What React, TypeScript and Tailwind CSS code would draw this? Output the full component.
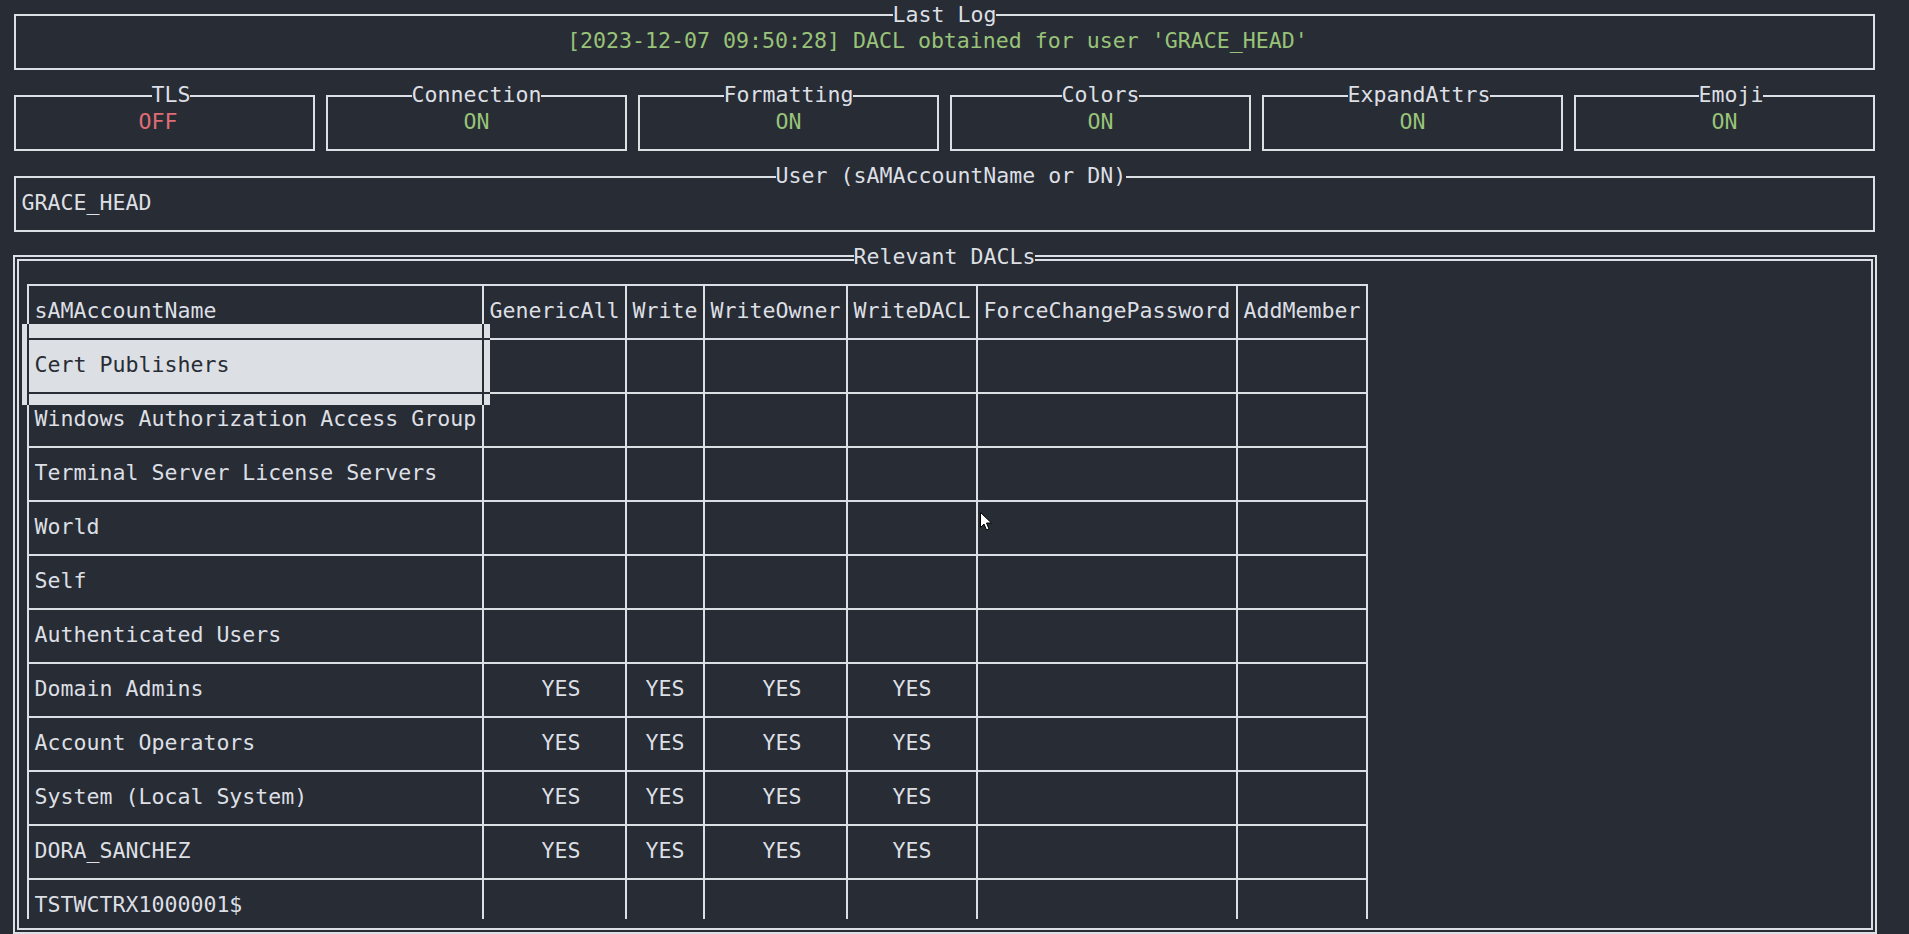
import React from 'react';

// terminal grid: 13px x 27px cells
const headers = [
  'sAMAccountName',
  'GenericAll',
  'Write',
  'WriteOwner',
  'WriteDACL',
  'ForceChangePassword',
  'AddMember',
];

// leading spaces that centre "YES" inside each column
const yesPad = ['', '    ', ' ', '    ', '   ', '', ''];

const rows = [
  { name: 'Cert Publishers', perms: [] as number[] },
  { name: 'Windows Authorization Access Group', perms: [] },
  { name: 'Terminal Server License Servers', perms: [] },
  { name: 'World', perms: [] },
  { name: 'Self', perms: [] },
  { name: 'Authenticated Users', perms: [] },
  { name: 'Domain Admins', perms: [1, 2, 3, 4] },
  { name: 'Account Operators', perms: [1, 2, 3, 4] },
  { name: 'System (Local System)', perms: [1, 2, 3, 4] },
  { name: 'DORA_SANCHEZ', perms: [1, 2, 3, 4] },
  { name: 'TSTWCTRX1000001$', perms: [] },
];

const toggles = [
  { title: 'TLS', value: '         OFF', color: 'text-[#e06c75]', pad: 'pl-[135.5px]' },
  { title: 'Connection', value: '          ON', color: 'text-[#98c379]', pad: 'pl-[83.5px]' },
  { title: 'Formatting', value: '          ON', color: 'text-[#98c379]', pad: 'pl-[83.5px]' },
  { title: 'Colors', value: '          ON', color: 'text-[#98c379]', pad: 'pl-[109.5px]' },
  { title: 'ExpandAttrs', value: '          ON', color: 'text-[#98c379]', pad: 'pl-[83.5px]' },
  { title: 'Emoji', value: '          ON', color: 'text-[#98c379]', pad: 'pl-[122.5px]' },
];

function Box({
  title,
  titlePad,
  className,
  double,
  children,
}: {
  title: string;
  titlePad: string;
  className: string;
  double?: boolean;
  children?: React.ReactNode;
}) {
  return (
    <div
      className={`flex flex-col border-[#dcdfe4] ${double ? 'border-[6px] border-double' : 'border-2'} ${className}`}
    >
      <div className={`flex h-0 items-center ${double ? '-mt-[4px] mb-[4px]' : '-mt-[2px] mb-[2px]'} ${titlePad}`}>
        <span className="bg-[#282c34] whitespace-pre leading-[27px]">{title}</span>
      </div>
      {children}
    </div>
  );
}

function Cursor() {
  return (
    <svg className="absolute left-[979px] top-[511px]" width="14" height="21" viewBox="0 0 14 21">
      <path
        d="M1.5 1.5 L1.5 16.5 L5 13 L7.5 19 L10 18 L7.5 12 L12.5 12 Z"
        fill="#ffffff"
        stroke="#000000"
        strokeWidth="1"
        strokeLinejoin="round"
      />
    </svg>
  );
}

export default function App() {
  return (
    <div className="relative flex h-screen w-full flex-col items-start overflow-hidden bg-[#282c34] pl-[14px] pt-[14px] font-['DejaVu_Sans_Mono',monospace] text-[21.59px] leading-[27px] text-[#dcdfe4]">
      {/* Last Log */}
      <Box title="Last Log" titlePad="pl-[876.5px]" className="h-[56px] w-[1861px]">
        <div className="flex flex-1 items-center whitespace-pre pb-[2px] pl-[5.5px] text-[#98c379]">
          {' '.repeat(42) + "[2023-12-07 09:50:28] DACL obtained for user 'GRACE_HEAD'"}
        </div>
      </Box>

      {/* Toggles */}
      <div className="mt-[25px] flex gap-[11px]">
        {toggles.map((t) => (
          <Box key={t.title} title={t.title} titlePad={t.pad} className="h-[56px] w-[301px]">
            <div className={`flex flex-1 items-center whitespace-pre pb-[2px] pl-[5.5px] ${t.color}`}>{t.value}</div>
          </Box>
        ))}
      </div>

      {/* User */}
      <Box title="User (sAMAccountName or DN)" titlePad="pl-[759.5px]" className="mt-[25px] h-[56px] w-[1861px]">
        <div className="flex flex-1 items-center whitespace-pre pb-[2px] pl-[5.5px]">GRACE_HEAD</div>
      </Box>

      {/* Relevant DACLs */}
      <Box
        title="Relevant DACLs"
        titlePad="pl-[834.5px]"
        double
        className="-ml-[1px] mt-[23px] h-[681px] w-[1864px]"
      >
        <div className="relative ml-[8px] mt-[23px] grid w-fit grid-cols-[455px_143px_78px_143px_130px_260px_130px] self-start border-l-2 border-t-2 border-[#dcdfe4]">
          {headers.map((h) => (
            <div
              key={h}
              className="flex h-[54px] items-center whitespace-pre border-b-2 border-r-2 border-[#dcdfe4] pb-[2px] pl-[5.5px]"
            >
              {h}
            </div>
          ))}
          {rows.map((r, ri) => {
            const last = ri === rows.length - 1;
            return headers.map((h, ci) => {
              let text = '';
              if (ci === 0) text = ri === 0 ? '' : r.name;
              else if (r.perms.includes(ci)) text = yesPad[ci] + 'YES';
              return (
                <div
                  key={r.name + h}
                  className={
                    last
                      ? 'h-[39px] whitespace-pre border-r-2 border-[#dcdfe4] pl-[5.5px] pt-[11.5px]'
                      : 'flex h-[54px] items-center whitespace-pre border-b-2 border-r-2 border-[#dcdfe4] pb-[2px] pl-[5.5px]'
                  }
                >
                  {text}
                </div>
              );
            });
          })}

          {/* selected cell */}
          <div className="absolute -left-[7px] top-[38px] grid grid-cols-[5px_2px_453px_2px_6px] grid-rows-[14px_2px_52px_2px_11px] bg-[#dcdfe4] text-[#282c34]">
            <div className="col-start-2 row-span-5 row-start-1 bg-[#282c34]" />
            <div className="col-start-4 row-span-5 row-start-1 bg-[#282c34]" />
            <div className="col-span-3 col-start-3 row-start-2 bg-[#282c34]" />
            <div className="col-span-3 col-start-3 row-start-4 bg-[#282c34]" />
            <div className="col-start-3 row-start-3 flex items-center whitespace-pre pb-[2px] pl-[5.5px]">
              Cert Publishers
            </div>
          </div>
        </div>
      </Box>

      <Cursor />
    </div>
  );
}
